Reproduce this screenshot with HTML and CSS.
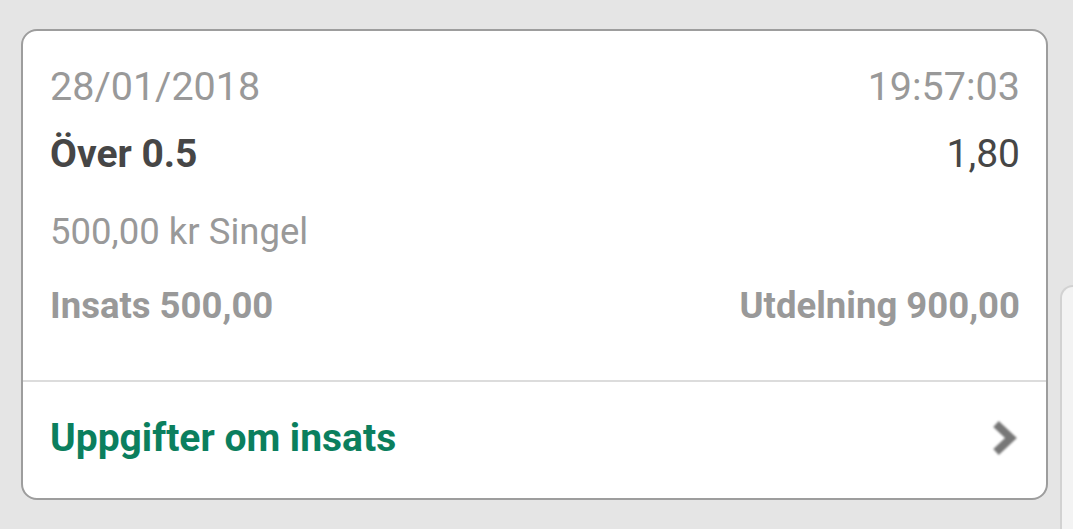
FILE: index.html
```html
<!DOCTYPE html>
<html lang="sv">
<head>
    <meta charset="UTF-8">
    <meta name="viewport" content="width=device-width, initial-scale=1.0">
    <title>Insats</title>

    <link rel="stylesheet" href="styles.css">

</head>
<body>

    <div class="list">
        <div class="bet">
            <div class="bet-body">
                <div class="row date-row">
                    <span>28/01/2018</span>
                    <span>19:57:03</span>
                </div>
                <div class="row title-row">
                    <span class="title">Över 0.5</span>
                    <span>1,80</span>
                </div>
                <div class="row type-row">
                    <span>500,00 kr Singel</span>
                </div>
                <div class="row sum-row">
                    <span>Insats 500,00</span>
                    <span>Utdelning 900,00</span>
                </div>
            </div>
            <div class="bet-foot">
                <span class="details">Uppgifter om insats</span>
                <svg class="chevron" width="26" height="40" viewBox="0 0 26 40">
                    <polyline points="5,6 20,20 5,34" fill="none" stroke="#777" stroke-width="8" stroke-linejoin="miter"/>
                </svg>
            </div>
        </div>

        <!-- next bet card, only its corner shows -->
        <div class="bet next"></div>
    </div>

</body>
</html>
```

FILE: styles.css
```css
body{
    margin: 0;
    padding: 0;
    background: #e5e5e5;
    font-family: Roboto, "Noto Sans", sans-serif;
    overflow: hidden;
    height: 529px;
}

.list{
    display: flex;
    align-items: flex-start;
    padding: 29px 0 0 21px;
}

.bet{
    flex: none;
    width: 1027px;
    height: 471px;
    box-sizing: border-box;
    background: white;
    border: 2px solid #9d9d9d;
    border-radius: 16px;
    display: flex;
    flex-direction: column;
}

.next{
    margin: 256px 0 0 12px;
    width: 13px;
    height: 244px;
    background: #f3f3f3;
    border-color: #d2d2d2;
    border-right: none;
    border-bottom: none;
    border-radius: 16px 0 0 0;
}

.bet-body{
    padding: 31px 26px 0 27px;
    height: 351px;
    box-sizing: border-box;
    border-bottom: 2px solid #dcdcdc;
}

.row{
    display: flex;
    justify-content: space-between;
    align-items: center;
    height: 48px;
    color: #999;
}

.date-row{
    font-size: 39.5px;
}

.title-row{
    margin-top: 20px;
    font-size: 39px;
    color: #464646;
}

.title{
    font-weight: bold;
}

.type-row{
    margin-top: 29px;
    font-size: 36.5px;
}

.sum-row{
    margin-top: 26px;
    font-size: 36.5px;
    font-weight: bold;
}

.bet-foot{
    flex: 1;
    display: flex;
    justify-content: space-between;
    align-items: center;
    padding: 0 27px 4px 27px;
}

.details{
    color: #0b7f5e;
    font-size: 39px;
    font-weight: bold;
}

.chevron{
    filter: blur(1px);
    margin-right: 2px;
}
```
